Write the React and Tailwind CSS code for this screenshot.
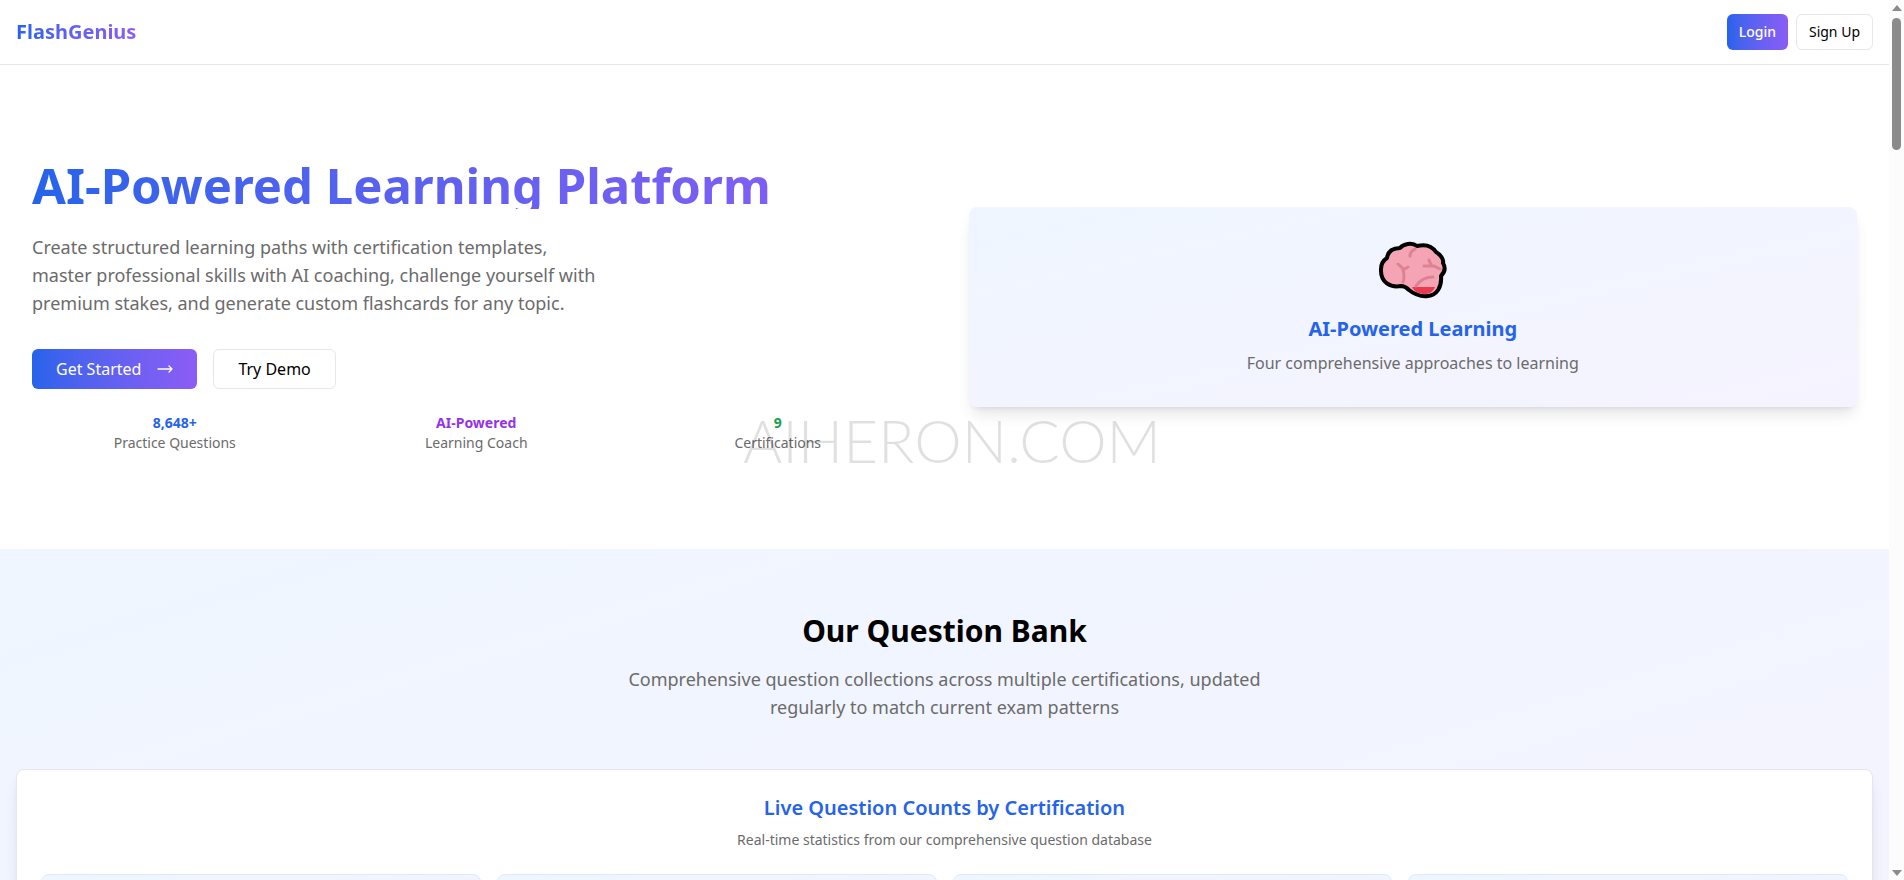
const stats = [
  { value: "8,648+", label: "Practice Questions", color: "text-[#2563eb]" },
  { value: "AI-Powered", label: "Learning Coach", color: "text-[#9333ea]" },
  { value: "9", label: "Certifications", color: "text-[#16a34a]" },
];

const certifications = ["one", "two", "three", "four"];

function BrainIcon() {
  return (
    <svg viewBox="1 -1 76 70" className="h-[70px] w-19" aria-hidden="true">
      <path
        d="M7 34C7 28 10 25 13 23C14 16 19 13 26 13C29 9 38 7 43 11C51 9 58 11 62 17C67 20 70 25 69 28C72 33 71 37 67 41C68 52 63 60 54 61C46 62 40 59 35 55C33 53 30 51 27 51C16 53 7 47 7 36Z"
        fill="#f4a4b4"
        stroke="#000"
        strokeWidth="4"
        strokeLinejoin="round"
      />
      <path d="M38 52H61C59 57 55 59 51 59C45 59 41 57 38 52Z" fill="#e83b50" />
      <g fill="none" stroke="#dd8292" strokeWidth="3" strokeLinecap="round">
        <path d="M24 29C26 31 28 32 29 34C30 39 31 43 29 47M29 34C32 34 33 33 34 32" />
        <path d="M41 14C37 16 36 18 36 21" />
        <path d="M50 31H60L66 34M57 30L55 25" />
        <path d="M42 51C46 45 52 42 59 42" />
      </g>
    </svg>
  );
}

function ArrowIcon() {
  return (
    <svg
      viewBox="0 0 16 16"
      className="size-4"
      fill="none"
      stroke="currentColor"
      strokeWidth="1.3"
      strokeLinecap="round"
      strokeLinejoin="round"
      aria-hidden="true"
    >
      <path d="M1 8H15M12 5L15 8L12 11" />
    </svg>
  );
}

function Header() {
  return (
    <header className="flex h-[65px] items-center justify-between border-b border-gray-200 px-4">
      <a
        href="#home"
        className="bg-linear-to-r from-[#2563eb] to-[#8b5cf6] bg-clip-text text-xl font-bold text-transparent"
      >
        FlashGenius
      </a>
      <div className="flex gap-2 text-sm">
        <button className="h-9 rounded-md bg-linear-to-r from-[#2563eb] to-[#8b5cf6] px-3 font-medium text-white">
          Login
        </button>
        <button className="h-9 rounded-md border border-gray-200 bg-white px-3 text-black">
          Sign Up
        </button>
      </div>
    </header>
  );
}

function Hero() {
  return (
    <section className="grid grid-cols-2 items-center gap-12 px-8 py-24">
      <div>
        <h1 className="bg-linear-to-r from-[#2563eb] to-[#8b5cf6] bg-clip-text text-[49px] leading-12 font-bold whitespace-nowrap text-transparent">
          AI-Powered Learning Platform
        </h1>
        <p className="mt-6 max-w-xl text-lg leading-7 text-[#6b6b6b]">
          Create structured learning paths with certification templates,
          master professional skills with AI coaching, challenge yourself with
          premium stakes, and generate custom flashcards for any topic.
        </p>
        <div className="mt-8 flex gap-4">
          <button className="flex h-10 items-center gap-4 rounded-md bg-linear-to-r from-[#2563eb] to-[#8b5cf6] px-6 text-base text-white">
            Get Started
            <ArrowIcon />
          </button>
          <button className="h-10 rounded-md border border-gray-200 bg-white px-6 text-base text-black">
            Try Demo
          </button>
        </div>
        <div className="mt-6 grid grid-cols-3 gap-4 text-center text-sm">
          {stats.map((stat) => (
            <div key={stat.label}>
              <p className={`font-bold ${stat.color}`}>{stat.value}</p>
              <p className="text-[#6b6b6b]">{stat.label}</p>
            </div>
          ))}
        </div>
      </div>

      <div className="rounded-lg bg-linear-to-br from-blue-50 to-violet-50 p-8 text-center shadow-lg">
        <div className="mb-4 flex h-15 items-center justify-center">
          <BrainIcon />
        </div>
        <h2 className="text-xl font-bold text-[#2563eb]">AI-Powered Learning</h2>
        <p className="mt-2 text-base text-[#6b6b6b]">
          Four comprehensive approaches to learning
        </p>
      </div>
    </section>
  );
}

function QuestionBank() {
  return (
    <section className="bg-linear-to-br from-blue-50 to-violet-50 px-4 py-16">
      <div className="text-center">
        <h2 className="text-3xl leading-9 font-bold text-black">
          Our Question Bank
        </h2>
        <p className="mx-auto mt-4 max-w-2xl text-lg leading-7 text-[#6b6b6b]">
          Comprehensive question collections across multiple certifications,
          updated regularly to match current exam patterns
        </p>
      </div>

      <div className="mt-12 rounded-lg border border-gray-200 bg-white p-6 shadow-lg">
        <div className="text-center">
          <h3 className="text-xl font-semibold text-[#2563eb]">
            Live Question Counts by Certification
          </h3>
          <p className="mt-2 text-sm text-[#6b6b6b]">
            Real-time statistics from our comprehensive question database
          </p>
        </div>
        <div className="mt-6 grid grid-cols-4 gap-4">
          {certifications.map((name) => (
            <div
              key={name}
              className="h-40 rounded-lg border border-blue-100 bg-linear-to-br from-blue-50 to-violet-50"
            />
          ))}
        </div>
      </div>
    </section>
  );
}

function ScrollRail() {
  return (
    <div className="flex w-[15px] shrink-0 flex-col items-center justify-between bg-[#fcfcfc] py-1">
      <div className="flex flex-col items-center gap-[7px]">
        <svg viewBox="0 0 10 6" className="mt-px h-1.5 w-2.5" fill="#8b8b8b">
          <path d="M5 0L10 6H0Z" />
        </svg>
        <div className="h-[132px] w-[9px] rounded-full bg-[#8b8b8b]" />
      </div>
      <svg viewBox="0 0 10 6" className="h-1.5 w-2.5" fill="#8b8b8b">
        <path d="M0 0H10L5 6Z" />
      </svg>
    </div>
  );
}

export default function App() {
  return (
    <div className="flex h-screen overflow-hidden bg-white font-['Noto_Sans',sans-serif]">
      <main className="min-w-0 flex-1 overflow-hidden">
        <Header />
        <Hero />
        <QuestionBank />
      </main>
      <ScrollRail />
      <div className="pointer-events-none fixed inset-0 flex items-center justify-center font-['Lato',sans-serif] text-6xl font-light text-black/12">
        AIHERON.COM
      </div>
    </div>
  );
}
